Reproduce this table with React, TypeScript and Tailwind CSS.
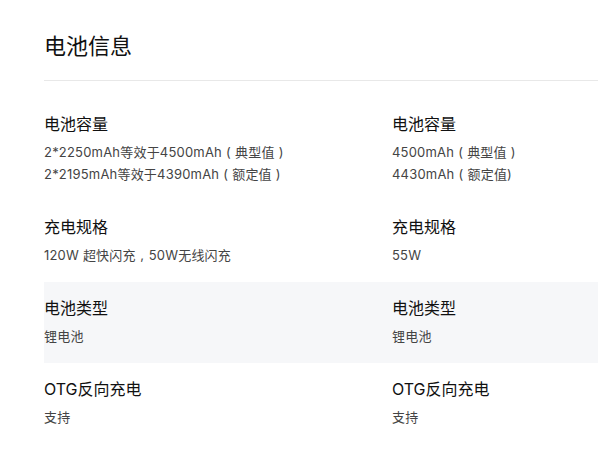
import { Fragment } from 'react'

const font = { fontFamily: 'Inter, "Noto Sans CJK SC", sans-serif' }

type Spec = { label: string; left: string[]; right: string[]; shaded?: boolean }

const specs: Spec[] = [
  {
    label: '电池容量',
    left: ['2*2250mAh等效于4500mAh（典型值）', '2*2195mAh等效于4390mAh（额定值）'],
    right: ['4500mAh（典型值）', '4430mAh（额定值)'],
  },
  { label: '充电规格', left: ['120W 超快闪充，50W无线闪充'], right: ['55W'] },
  { label: '电池类型', left: ['锂电池'], right: ['锂电池'], shaded: true },
  { label: 'OTG反向充电', left: ['支持'], right: ['支持'] },
]

// full-width punctuation sits centred in its box in the reference
const centred: Record<string, string> = { '（': '(', '）': ')', '，': ',' }

function Line({ text }: { text: string }) {
  const parts = text.split(/([（），])/)
  return (
    <p className="text-[13px] leading-[22px] tracking-[0.2px] text-[#444]">
      {parts.map((p, i) =>
        centred[p] ? (
          <span key={i} className="inline-block w-[13px] text-center">
            {centred[p]}
          </span>
        ) : (
          <Fragment key={i}>{p}</Fragment>
        )
      )}
    </p>
  )
}

function Cell({ label, lines }: { label: string; lines: string[] }) {
  return (
    <div>
      <p className="text-[16px] leading-[20px] text-[#111]">{label}</p>
      <div className="mt-[7px]">
        {lines.map((l) => (
          <Line key={l} text={l} />
        ))}
      </div>
    </div>
  )
}

export default function App() {
  return (
    <main className="w-[600px] h-[454px] bg-white overflow-hidden" style={font}>
      <div className="ml-[44px] mr-[2px]">
        {/* Title */}
        <h1 className="pt-[31px] text-[22px] leading-[30px] text-[#111]">电池信息</h1>
        <div className="mt-[19px] h-px bg-[#e8e8e8]" />

        {/* Spec rows */}
        <div className="mt-[17px]">
          {specs.map((s) => (
            <div
              key={s.label}
              className={`grid grid-cols-[348px_1fr] pt-[16px] pb-[16px] ${s.shaded ? 'bg-[#f6f7f9]' : ''}`}
            >
              <Cell label={s.label} lines={s.left} />
              <Cell label={s.label} lines={s.right} />
            </div>
          ))}
        </div>
      </div>
    </main>
  )
}
